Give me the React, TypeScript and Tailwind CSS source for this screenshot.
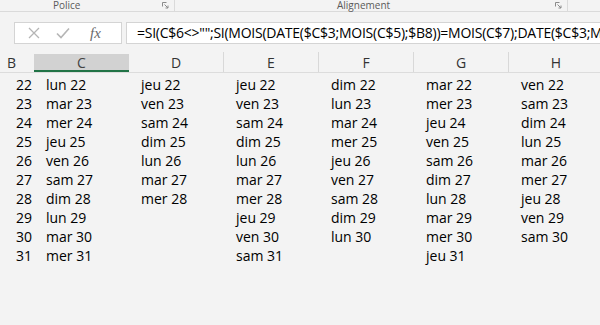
import React from "react";

const cols: { letter: string; items: string[] }[] = [
  { letter: "C", items: ["lun 22", "mar 23", "mer 24", "jeu 25", "ven 26", "sam 27", "dim 28", "lun 29", "mar 30", "mer 31"] },
  { letter: "D", items: ["jeu 22", "ven 23", "sam 24", "dim 25", "lun 26", "mar 27", "mer 28"] },
  { letter: "E", items: ["jeu 22", "ven 23", "sam 24", "dim 25", "lun 26", "mar 27", "mer 28", "jeu 29", "ven 30", "sam 31"] },
  { letter: "F", items: ["dim 22", "lun 23", "mar 24", "mer 25", "jeu 26", "ven 27", "sam 28", "dim 29", "lun 30"] },
  { letter: "G", items: ["mar 22", "mer 23", "jeu 24", "ven 25", "sam 26", "dim 27", "lun 28", "mar 29", "mer 30", "jeu 31"] },
  { letter: "H", items: ["ven 22", "sam 23", "dim 24", "lun 25", "mar 26", "mer 27", "jeu 28", "ven 29", "sam 30"] },
];

const rows = [22, 23, 24, 25, 26, 27, 28, 29, 30, 31];

function Launcher() {
  return (
    <svg width="7" height="7" viewBox="0 0 7 7" className="text-[#8a8a8a]">
      <path d="M0.5 0.5h4M0.5 0.5v4" stroke="currentColor" strokeWidth="1" fill="none" />
      <path d="M2.5 2.5l3.5 3.5M6 3.5v2.5h-2.5" stroke="currentColor" strokeWidth="1" fill="none" />
    </svg>
  );
}

export default function App() {
  return (
    <div
      className="w-[600px] h-[325px] overflow-hidden bg-[#f3f3f3] text-black"
      style={{ fontFamily: '"Open Sans", "Noto Sans", sans-serif' }}
    >
      {/* Ribbon group labels */}
      <div className="h-[12px] flex border-b border-[#dadada] text-[10px] leading-[10px] text-[#5a5a5a]">
        <div className="w-[175px] shrink-0 border-r border-[#dadada] relative">
          <span className="absolute left-[53px] top-0">Police</span>
          <span className="absolute left-[162px] top-[2px]"><Launcher /></span>
        </div>
        <div className="w-[393px] shrink-0 relative border-r border-[#dadada]">
          <span className="absolute left-[162px] top-0">Alignement</span>
          <span className="absolute left-[380px] top-[2px]"><Launcher /></span>
        </div>
      </div>

      {/* Formula bar */}
      <div className="flex mt-[10px] h-[22px]">
        <div className="ml-[14px] w-[108px] shrink-0 bg-white border border-[#d4d4d4] flex items-center">
          <svg width="12" height="12" viewBox="0 0 12 12" className="ml-[13px]">
            <path d="M1 1L11 11M11 1L1 11" stroke="#b5b5b5" strokeWidth="1.3" />
          </svg>
          <svg width="14" height="12" viewBox="0 0 14 12" className="ml-[16px]">
            <path d="M1 6.5L5 10.5L13 1.5" stroke="#b5b5b5" strokeWidth="1.6" fill="none" />
          </svg>
          <span
            className="ml-[20px] text-[15px] italic text-[#6a6a6a] leading-none"
            style={{ fontFamily: '"Liberation Serif", serif' }}
          >
            fx
          </span>
        </div>
        <div className="ml-[4px] flex-1 bg-white border border-[#d4d4d4] border-r-0 flex items-center overflow-hidden whitespace-nowrap">
          <span className="ml-[10px] text-[14px] leading-none tracking-[-0.25px]">
            =SI(C$6&lt;&gt;"";SI(MOIS(DATE($C$3;MOIS(C$5);$B8))=MOIS(C$7);DATE($C$3;MOIS(C$5);$B8);"");"")
          </span>
        </div>
      </div>

      {/* Column headers */}
      <div className="flex mt-[8px] h-[21px] text-[14px] border-b border-[#dcdcdc] text-[#333]">
        <div className="w-[34px] shrink-0 flex items-center pl-[7px]">B</div>
        {cols.map((c) => (
          <div
            key={c.letter}
            className={
              c.letter === "C"
                ? "w-[95px] shrink-0 flex items-center justify-center bg-[#d2d2d2] border-b-2 border-[#217346] text-[#444] mt-[2px]"
                : "w-[95px] shrink-0 flex items-center justify-center border-r border-[#d8d8d8]"
            }
          >
            {c.letter}
          </div>
        ))}
      </div>

      {/* Data */}
      <div className="flex mt-[2px] text-[14px]">
        <div className="w-[34px] shrink-0 flex flex-col">
          {rows.map((r) => (
            <div key={r} className="h-[19px] leading-[19px] text-right pr-[2px]">
              {r}
            </div>
          ))}
        </div>
        {cols.map((c) => (
          <div key={c.letter} className="w-[95px] shrink-0 flex flex-col pl-[12px]">
            {c.items.map((t) => (
              <div key={t} className="h-[19px] leading-[19px] whitespace-nowrap">
                {t}
              </div>
            ))}
          </div>
        ))}
      </div>
    </div>
  );
}
